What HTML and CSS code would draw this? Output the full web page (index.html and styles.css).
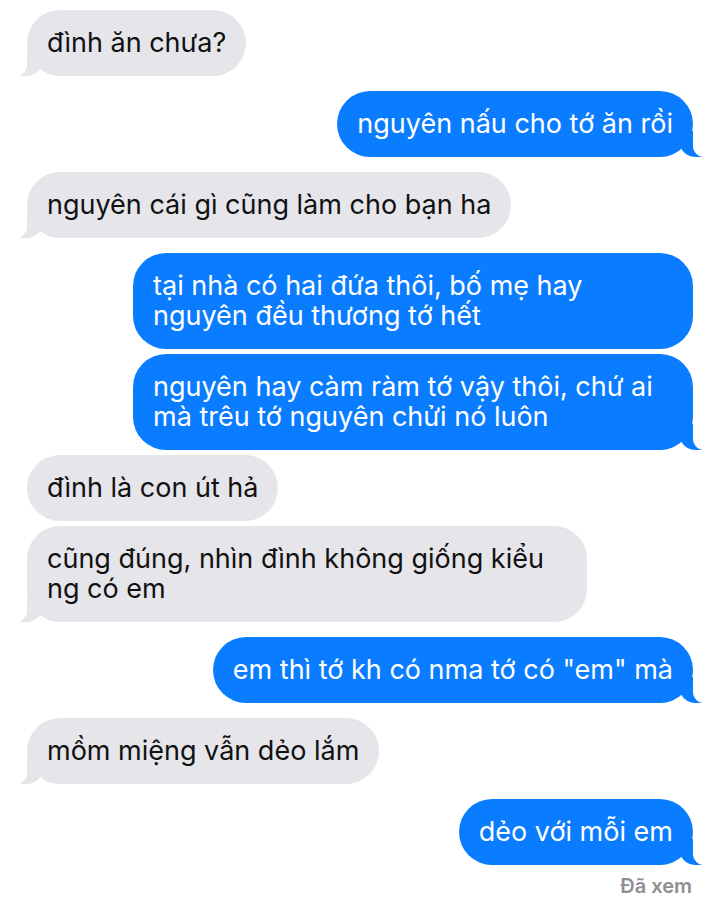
FILE: index.html
```html
<!DOCTYPE html>
<html lang="vi">
    <head>
        <meta charset="UTF-8">
        <title>Tin nhắn</title>
        <link rel="stylesheet" href="styles.css">
    </head>
    <body>
        <div class="thread">
            <div class="bubble them tail">đình ăn chưa?</div>
            <div class="bubble me tail">nguyên nấu cho tớ ăn rồi</div>
            <div class="bubble them tail">nguyên cái gì cũng làm cho bạn ha</div>
            <div class="bubble me wide group">tại nhà có hai đứa thôi, bố mẹ hay<br>nguyên đều thương tớ hết</div>
            <div class="bubble me wide tail group">nguyên hay càm ràm tớ vậy thôi, chứ ai<br>mà trêu tớ nguyên chửi nó luôn</div>
            <div class="bubble them group">đình là con út hả</div>
            <div class="bubble them wide tail">cũng đúng, nhìn đình không giống kiểu<br>ng có em</div>
            <div class="bubble me tail">em thì tớ kh có nma tớ có "em" mà</div>
            <div class="bubble them tail">mồm miệng vẫn dẻo lắm</div>
            <div class="bubble me tail">dẻo với mỗi em</div>
            <div class="seen">Đã xem</div>
        </div>
    </body>
</html>
```
FILE: styles.css
```css
body {
    margin: 0;
    background-color: #ffffff;
    font-family: 'Inter', 'Roboto', sans-serif;
}
.thread {
    display: flex;
    flex-direction: column;
    padding: 10px 27px 0;
}
.bubble {
    position: relative;
    padding: 18px 20px;
    font-size: 27px;
    line-height: 30px;
    border-radius: 33px;
    margin-bottom: 15px;
    white-space: nowrap;
}
.bubble.wide {
    width: 560px;
    box-sizing: border-box;
}
.bubble.group {
    margin-bottom: 5px;
}
.them {
    align-self: flex-start;
    background-color: #e5e5ea;
    color: #111111;
}
.me {
    align-self: flex-end;
    background-color: #0a7cff;
    color: #ffffff;
}

/* tails */
.tail::before, .tail::after {
    content: "";
    position: absolute;
    bottom: 0;
    height: 26px;
}
.me.tail::before {
    right: -9px;
    width: 22px;
    background-color: #0a7cff;
    border-bottom-left-radius: 16px 14px;
}
.me.tail::after {
    right: -26px;
    width: 26px;
    background-color: #ffffff;
    border-bottom-left-radius: 11px;
}
.them.tail::before {
    left: -7px;
    width: 22px;
    background-color: #e5e5ea;
    border-bottom-right-radius: 16px 14px;
}
.them.tail::after {
    left: -26px;
    width: 26px;
    background-color: #ffffff;
    border-bottom-right-radius: 11px;
}
.seen {
    align-self: flex-end;
    margin-top: -6px;
    margin-right: 1px;
    color: #8e8e93;
    font-size: 20px;
    font-weight: 600;
}
```
